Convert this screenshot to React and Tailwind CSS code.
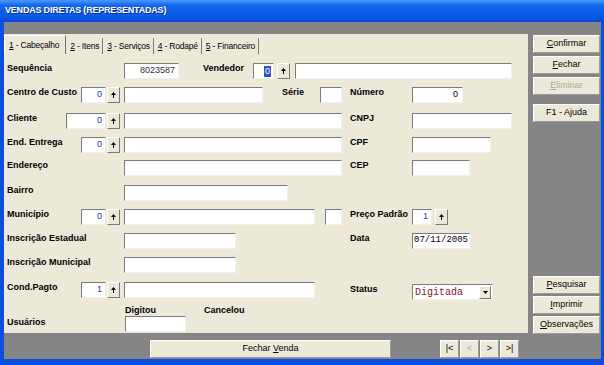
import React from "react";

const ui = "font-['Liberation_Sans',Arial,sans-serif]";
const mono = "font-['Liberation_Mono','Courier_New',monospace]";
const lbl = "text-[9px] font-bold leading-[11px] text-black whitespace-nowrap";

function Box({ className = "", children }) {
  return (
    <div
      className={`h-[16px] bg-white border border-t-[#7b7b7b] border-l-[#7b7b7b] border-b-[#f2f1ea] border-r-[#f2f1ea] flex items-center overflow-hidden ${className}`}
    >
      {children}
    </div>
  );
}

function UpBtn({ className = "" }) {
  return (
    <div
      className={`w-[13px] h-[16px] bg-[#ece9d8] border border-t-white border-l-white border-b-[#7b7b7b] border-r-[#7b7b7b] flex items-center justify-center ${className}`}
    >
      <svg width="5" height="7" viewBox="0 0 5 7">
        <path d="M2.5 0 L5 3 L0 3 Z" fill="#000" />
        <rect x="2" y="3" width="1" height="3" fill="#000" />
      </svg>
    </div>
  );
}

function Code({ w, value = "0" }) {
  return (
    <Box className={`${w} justify-end pr-[3px]`}>
      <span className="text-[9px] text-[#2033d0]">{value}</span>
    </Box>
  );
}

function LeftLabel({ text, code, codeW = "w-[25px]" }) {
  return (
    <div className="w-[117px] flex items-start shrink-0">
      <span className={lbl}>{text}</span>
      {code !== undefined && (
        <>
          <Code w={`${codeW} ml-auto`} value={code} />
          <UpBtn className="ml-[1px] mr-[4px]" />
        </>
      )}
    </div>
  );
}

function RightLabel({ text, className = "" }) {
  return <span className={`${lbl} w-[62px] shrink-0 ${className}`}>{text}</span>;
}

function Btn({ children, disabled, className = "" }) {
  return (
    <div
      className={`h-[18px] bg-[#ece9d8] border border-t-white border-l-white border-b-[#9b9b9b] border-r-[#9b9b9b] flex items-center justify-center text-[9px] ${disabled ? "text-[#aca899]" : "text-black"} ${className}`}
    >
      {children}
    </div>
  );
}

function Tab({ n, text, active }) {
  if (active) {
    return (
      <div className="h-[19px] pl-[4px] pr-[6px] flex items-center border-t border-l border-white border-r border-r-[#6f6f6f] text-[8.5px] tracking-[-0.2px] text-black">
        <u>{n}</u>&nbsp;-&nbsp;{text}
      </div>
    );
  }
  return (
    <div className="h-[16px] mt-[3px] pl-[4px] pr-[2px] flex items-center border-r border-r-[#7b7b7b] text-[8.5px] tracking-[-0.2px] text-black">
      <span className="pr-[1px]">
        <u>{n}</u>&nbsp;-&nbsp;{text}
      </span>
    </div>
  );
}

export default function App() {
  return (
    <div className={`w-[604px] h-[365px] bg-[#0a4fe0] flex flex-col ${ui}`}>
      <div className="h-[22px] shrink-0 bg-[linear-gradient(to_bottom,#4a98fa,#1266ee_25%,#0a5ce8_70%,#0748d4)] flex items-center pl-[5px]">
        <span className="text-white font-bold text-[9px] tracking-[-0.2px] [text-shadow:1px_1px_0_#0a2f8f]">
          VENDAS DIRETAS (REPRESENTADAS)
        </span>
      </div>

      <div className="flex-1 ml-[4px] mr-[3px] mb-[6px] bg-[#858585] flex flex-col">
        <div className="h-[12px] shrink-0" />
        <div className="flex flex-1 min-h-0">
          <div className="w-[524px] bg-[#ece9d8] flex flex-col">
            <div className="h-[20px] flex items-start pt-[1px]">
              <Tab n="1" text="Cabeçalho" active />
              <Tab n="2" text="Itens" />
              <Tab n="3" text="Serviços" />
              <Tab n="4" text="Rodapé" />
              <Tab n="5" text="Financeiro" />
            </div>

            <div className="pl-[3px] flex flex-col">
              <div className="flex items-start mt-[9px]">
                <LeftLabel text="Sequência" />
                <Box className="w-[55px] justify-end pr-[3px]">
                  <span className="text-[9px] text-[#333]">8023587</span>
                </Box>
                <span className={`${lbl} ml-[24px] w-[50px]`}>Vendedor</span>
                <Box className="w-[21px] justify-end pr-[2px]">
                  <span className="text-[9px] leading-[11px] px-[1px] bg-[#2a54c8] text-white">0</span>
                </Box>
                <UpBtn className="ml-[3px]" />
                <Box className="ml-[5px] w-[217px]" />
              </div>

              <div className="flex items-start mt-[8px]">
                <LeftLabel text="Centro de Custo" code="0" />
                <Box className="w-[139px]" />
                <span className={`${lbl} ml-[19px] w-[38px]`}>Série</span>
                <Box className="w-[22px]" />
                <RightLabel text="Número" className="ml-[8px]" />
                <Box className="w-[51px] justify-end pr-[4px]">
                  <span className="text-[9px] text-black">0</span>
                </Box>
              </div>

              <div className="flex items-start mt-[10px]">
                <LeftLabel text="Cliente" code="0" codeW="w-[40px]" />
                <Box className="w-[218px]" />
                <RightLabel text="CNPJ" className="ml-[8px]" />
                <Box className="w-[100px]" />
              </div>

              <div className="flex items-start mt-[8px]">
                <LeftLabel text="End. Entrega" code="0" />
                <Box className="w-[218px]" />
                <RightLabel text="CPF" className="ml-[8px]" />
                <Box className="w-[79px]" />
              </div>

              <div className="flex items-start mt-[7px]">
                <LeftLabel text="Endereço" />
                <Box className="w-[218px]" />
                <RightLabel text="CEP" className="ml-[8px]" />
                <Box className="w-[58px]" />
              </div>

              <div className="flex items-start mt-[9px]">
                <LeftLabel text="Bairro" />
                <Box className="w-[164px]" />
              </div>

              <div className="flex items-start mt-[8px]">
                <LeftLabel text="Município" code="0" />
                <Box className="w-[191px]" />
                <Box className="ml-[10px] w-[17px]" />
                <RightLabel text="Preço Padrão" className="ml-[8px]" />
                <Code w="w-[20px]" value="1" />
                <UpBtn className="ml-[3px]" />
              </div>

              <div className="flex items-start mt-[8px]">
                <LeftLabel text="Inscrição Estadual" />
                <Box className="w-[112px]" />
                <RightLabel text="Data" className="ml-[114px]" />
                <Box className="w-[58px] pl-[1px]">
                  <span className={`${mono} text-[9px] text-black`}>07/11/2005</span>
                </Box>
              </div>

              <div className="flex items-start mt-[8px]">
                <LeftLabel text="Inscrição Municipal" />
                <Box className="w-[112px]" />
              </div>

              <div className="flex items-start mt-[9px]">
                <LeftLabel text="Cond.Pagto" code="1" />
                <Box className="w-[191px]" />
                <RightLabel text="Status" className="ml-[35px] mt-[2px]" />
                <Box className="w-[81px] mt-[2px] pl-[2px] justify-between">
                  <span className={`${mono} text-[10px] text-[#8b1a1a]`}>Digitada</span>
                  <div className="w-[12px] h-[13px] mr-[1px] bg-[#ece9d8] border border-t-white border-l-white border-b-[#7b7b7b] border-r-[#7b7b7b] flex items-center justify-center">
                    <svg width="5" height="3" viewBox="0 0 5 3">
                      <path d="M0 0 L5 0 L2.5 3 Z" fill="#000" />
                    </svg>
                  </div>
                </Box>
              </div>

              <div className="flex items-start mt-[5px]">
                <span className={`${lbl} ml-[118px] w-[79px]`}>Digitou</span>
                <span className={lbl}>Cancelou</span>
              </div>
              <div className="flex items-start">
                <span className={`${lbl} w-[118px] mt-[1px]`}>Usuários</span>
                <Box className="w-[61px] h-[15px]" />
              </div>
            </div>
          </div>

          <div className="ml-[5px] w-[67px] flex flex-col pt-[1px]">
            <Btn>
              <span><u>C</u>onfirmar</span>
            </Btn>
            <Btn className="mt-[3px]">
              <span><u>F</u>echar</span>
            </Btn>
            <Btn className="mt-[3px]" disabled>
              <span><u>E</u>liminar</span>
            </Btn>
            <Btn className="mt-[9px]">F1 - Ajuda</Btn>
            <div className="flex-1" />
            <Btn>
              <span><u>P</u>esquisar</span>
            </Btn>
            <Btn className="mt-[2px]">
              <span><u>I</u>mprimir</span>
            </Btn>
            <Btn className="mt-[2px] mb-[-1px]">
              <span><u>O</u>bservações</span>
            </Btn>
          </div>
        </div>

        <div className="h-[26px] shrink-0 flex items-start pt-[7px]">
          <Btn className="ml-[146px] w-[241px] h-[17px]">
            <span>Fechar <u>V</u>enda</span>
          </Btn>
          <div className="ml-[49px] flex gap-[1px]">
            <Btn className="w-[19px] h-[18px]">|&lt;</Btn>
            <Btn className="w-[19px] h-[18px]" disabled>&lt;</Btn>
            <Btn className="w-[19px] h-[18px]">&gt;</Btn>
            <Btn className="w-[19px] h-[18px]">&gt;|</Btn>
          </div>
        </div>
      </div>
    </div>
  );
}
